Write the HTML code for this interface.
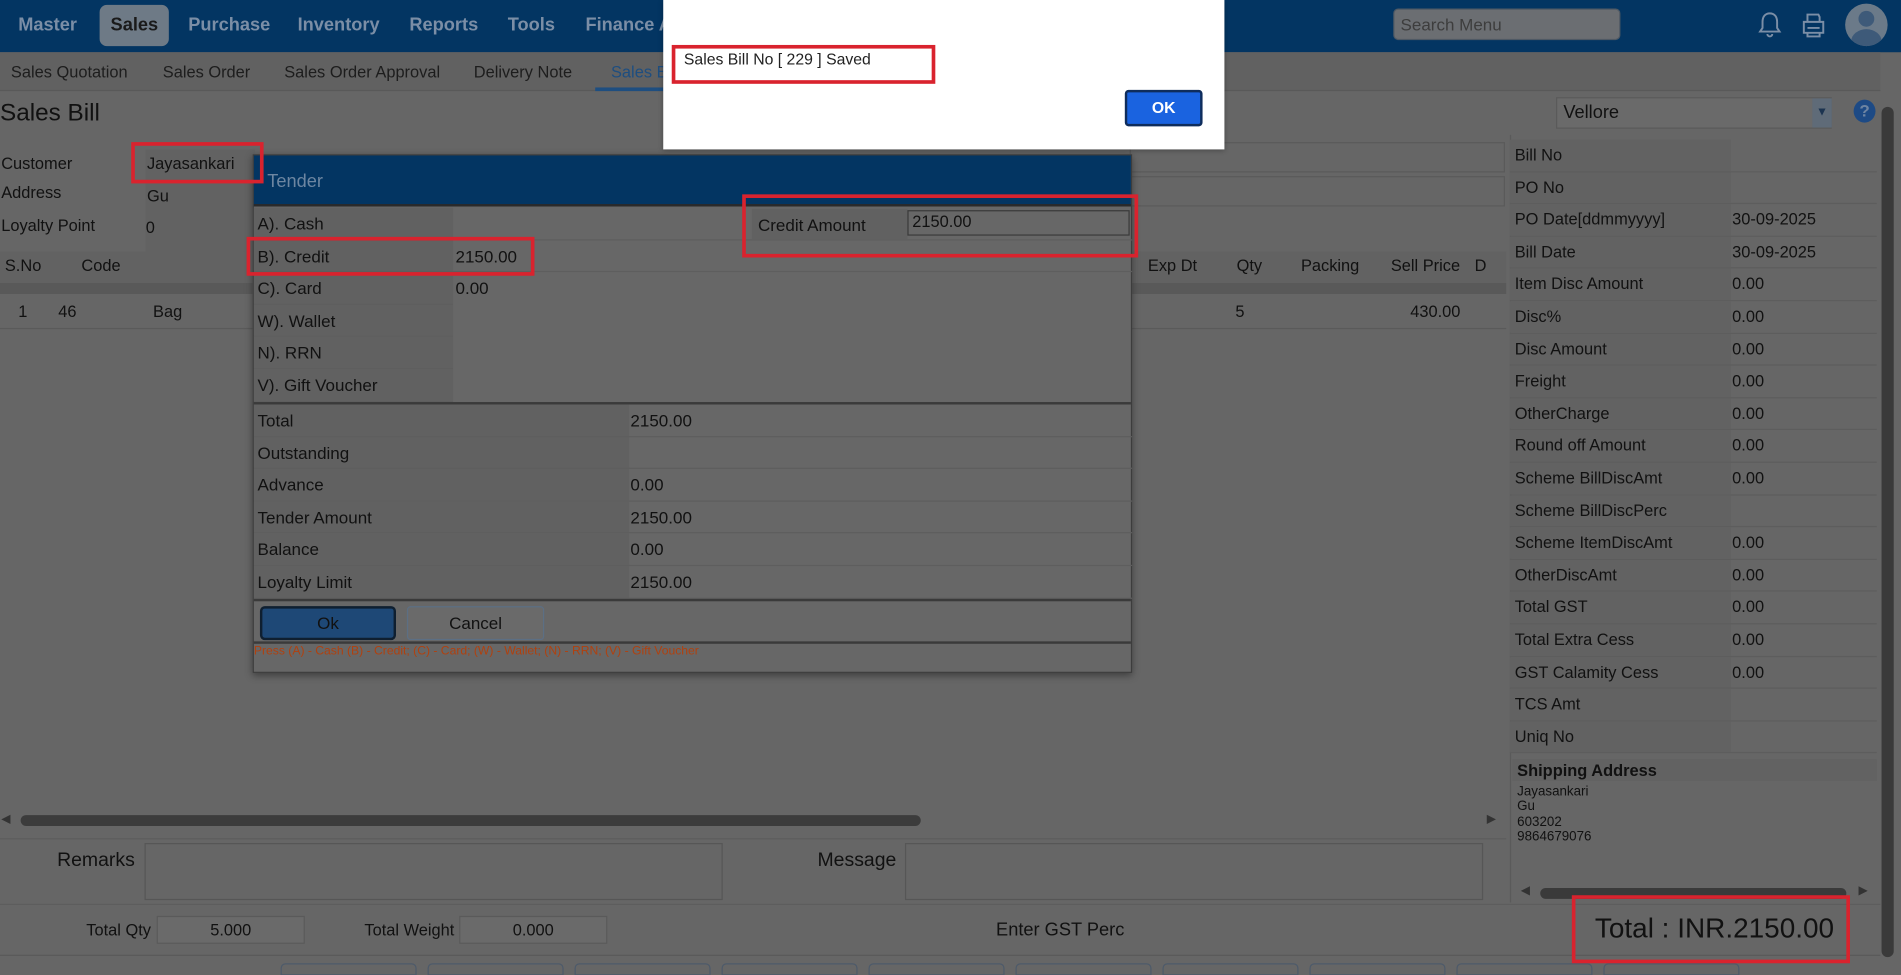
<!DOCTYPE html>
<html><head><meta charset="utf-8"><style>
*{box-sizing:border-box;margin:0;padding:0}
html,body{width:1901px;height:970px;overflow:hidden;background:#666}
#w{position:absolute;left:0;top:0;width:1565px;height:800px;transform:scale(1.21470);transform-origin:0 0;background:#666;font-family:"Liberation Sans",sans-serif;color:#111;font-size:14px}
.a{position:absolute;white-space:nowrap}
.nav{left:0;top:0;width:1565px;height:43px;background:#033562}
.ni{top:12px;font-size:15px;font-weight:bold;color:#7b8ea6}
.sub{left:0;top:43px;width:1548px;height:32px;background:#616161;border-bottom:1px solid #595959}
.si{top:52px;font-size:13.5px;color:#1d1d1d}
.lbl{font-size:13.5px;color:#111}
.rp{left:1243px;width:302px;height:26.6px;border-bottom:1px solid #5d5d5d}
.rp .l{position:absolute;left:0;top:0;width:182px;height:100%;background:#626262;padding:5px 4px;font-size:13.5px}
.rp .v{position:absolute;left:183px;top:5px;font-size:13.5px}
.red{position:absolute;border:3px solid #d9232e}
.tr{position:absolute;left:0;height:26.6px;width:723px;border-bottom:1px solid #5e5e5e}
.tr .l{position:absolute;left:0;top:0;height:100%;background:#616161;padding:5px 3px}
.tr .v{position:absolute;top:5px}
</style></head><body><div id="w">
<div class="a nav"></div>
<div class="a ni" style="left:15px">Master</div>
<div class="a" style="left:82px;top:4px;width:57px;height:34px;background:#6e7a86;border-radius:6px"></div>
<div class="a ni" style="left:91px;color:#1a1a1a">Sales</div>
<div class="a ni" style="left:155px">Purchase</div>
<div class="a ni" style="left:245px">Inventory</div>
<div class="a ni" style="left:337px">Reports</div>
<div class="a ni" style="left:418px">Tools</div>
<div class="a ni" style="left:482px">Finance A</div>
<div class="a" style="left:1147px;top:7px;width:187px;height:26px;background:#6b6e72;border-radius:4px;border:1px solid #4f5964"></div>
<div class="a" style="left:1153px;top:12px;font-size:14px;color:#3d3d3d">Search Menu</div>
<svg class="a" style="left:1447px;top:9px" width="20" height="24" viewBox="0 0 20 24"><path d="M10 2c-4 0-6 3-6 7v5l-2 3h16l-2-3V9c0-4-2-7-6-7zM8 19a2 2 0 0 0 4 0" fill="none" stroke="#7b8ea6" stroke-width="1.6"/></svg>
<svg class="a" style="left:1482px;top:10px" width="22" height="22" viewBox="0 0 22 22"><path d="M6 8V2h9l1 2v4M3 8h16v9H3zM6 17v3h10v-3M6 13h10" fill="none" stroke="#7b8ea6" stroke-width="1.6"/></svg>
<div class="a" style="left:1519px;top:3px;width:35px;height:35px;border-radius:50%;background:#6b7a89;overflow:hidden"><div class="a" style="left:11px;top:6px;width:13px;height:13px;border-radius:50%;background:#3e5a79"></div><div class="a" style="left:5px;top:21px;width:25px;height:20px;border-radius:50%;background:#3e5a79"></div></div>
<div class="a sub"></div>
<div class="a si" style="left:9px">Sales Quotation</div>
<div class="a si" style="left:134px">Sales Order</div>
<div class="a si" style="left:234px">Sales Order Approval</div>
<div class="a si" style="left:390px">Delivery Note</div>
<div class="a si" style="left:503px;color:#1e4e80">Sales B</div>
<div class="a" style="left:490px;top:72px;width:56px;height:3px;background:#1e4e80"></div>
<div class="a" style="left:1548px;top:80px;width:12px;height:720px"><div style="margin:8px 1px;width:10px;height:700px;background:#3a3a3a;border-radius:5px"></div></div>
<div class="a" style="left:0;top:82px;font-size:20px;color:#111">Sales Bill</div>
<div class="a" style="left:1281px;top:80px;width:227px;height:26px;background:#6a6a6a;border:1px solid #5a5a5a"></div>
<div class="a" style="left:1287px;top:84px;font-size:15px">Vellore</div>
<div class="a" style="left:1492px;top:81px;width:16px;height:24px;background:#5f6b78;color:#1c3450;font-size:10px;text-align:center;line-height:24px">▼</div>
<div class="a" style="left:1526px;top:82px;width:18px;height:19px;border-radius:50%;background:#1d4a85;color:#6d84a2;font-weight:bold;font-size:14px;text-align:center;line-height:19px">?</div>
<!-- left form -->
<div class="a lbl" style="left:1px;top:127px">Customer</div>
<div class="a lbl" style="left:1px;top:151px">Address</div>
<div class="a lbl" style="left:1px;top:178px">Loyalty Point</div>
<div class="a" style="left:120px;top:123px;width:90px;height:85px;background:#626262"></div>
<div class="a lbl" style="left:121px;top:127px">Jayasankari</div>
<div class="a lbl" style="left:121px;top:154px">Gu</div>
<div class="a lbl" style="left:120px;top:180px">0</div>
<div class="a" style="left:930px;top:117px;width:309px;height:25px;border:1px solid #5a5a5a"></div>
<div class="a" style="left:930px;top:145px;width:309px;height:25px;border:1px solid #5a5a5a"></div>
<div class="a" style="left:0;top:207px;width:1240px;height:26px;background:#626262"></div>
<div class="a" style="left:0;top:233px;width:1240px;height:9px;background:#595959"></div>
<div class="a lbl" style="left:4px;top:211px">S.No</div>
<div class="a lbl" style="left:67px;top:211px">Code</div>
<div class="a lbl" style="left:945px;top:211px">Exp Dt</div>
<div class="a lbl" style="left:1018px;top:211px">Qty</div>
<div class="a lbl" style="left:1071px;top:211px">Packing</div>
<div class="a lbl" style="left:1145px;top:211px">Sell Price</div>
<div class="a lbl" style="left:1214px;top:211px">D</div>
<div class="a" style="left:0;top:270px;width:1240px;height:1px;background:#5a5a5a"></div>
<div class="a lbl" style="left:15px;top:249px">1</div>
<div class="a lbl" style="left:48px;top:249px">46</div>
<div class="a lbl" style="left:126px;top:249px">Bag</div>
<div class="a lbl" style="left:1017px;top:249px">5</div>
<div class="a lbl" style="left:1161px;top:249px">430.00</div>
<!-- right panel -->
<div class="a" style="left:1243px;top:111px;width:302px;height:632px;border-left:1px solid #5a5a5a"></div>
<div class="a rp" style="top:115px"><div class="l">Bill No</div><div class="v"></div></div>
<div class="a rp" style="top:141.6px"><div class="l">PO No</div></div>
<div class="a rp" style="top:168.2px"><div class="l">PO Date[ddmmyyyy]</div><div class="v">30-09-2025</div></div>
<div class="a rp" style="top:194.8px"><div class="l">Bill Date</div><div class="v">30-09-2025</div></div>
<div class="a rp" style="top:221.4px"><div class="l">Item Disc Amount</div><div class="v">0.00</div></div>
<div class="a rp" style="top:248px"><div class="l">Disc%</div><div class="v">0.00</div></div>
<div class="a rp" style="top:274.6px"><div class="l">Disc Amount</div><div class="v">0.00</div></div>
<div class="a rp" style="top:301.2px"><div class="l">Freight</div><div class="v">0.00</div></div>
<div class="a rp" style="top:327.8px"><div class="l">OtherCharge</div><div class="v">0.00</div></div>
<div class="a rp" style="top:354.4px"><div class="l">Round off Amount</div><div class="v">0.00</div></div>
<div class="a rp" style="top:381px"><div class="l">Scheme BillDiscAmt</div><div class="v">0.00</div></div>
<div class="a rp" style="top:407.6px"><div class="l">Scheme BillDiscPerc</div></div>
<div class="a rp" style="top:434.2px"><div class="l">Scheme ItemDiscAmt</div><div class="v">0.00</div></div>
<div class="a rp" style="top:460.8px"><div class="l">OtherDiscAmt</div><div class="v">0.00</div></div>
<div class="a rp" style="top:487.4px"><div class="l">Total GST</div><div class="v">0.00</div></div>
<div class="a rp" style="top:514px"><div class="l">Total Extra Cess</div><div class="v">0.00</div></div>
<div class="a rp" style="top:540.6px"><div class="l">GST Calamity Cess</div><div class="v">0.00</div></div>
<div class="a rp" style="top:567.2px"><div class="l">TCS Amt</div></div>
<div class="a rp" style="top:593.8px"><div class="l">Uniq No</div></div>
<div class="a" style="left:1245px;top:625px;width:300px;height:18px;background:#626262"></div>
<div class="a" style="left:1249px;top:627px;font-size:13.5px;font-weight:bold">Shipping Address</div>
<div class="a" style="left:1249px;top:646px;font-size:11px;line-height:12.4px;white-space:pre">Jayasankari
Gu
603202
9864679076</div>
<div class="a" style="left:1268px;top:731px;width:252px;height:9px;background:#3a3a3a;border-radius:5px"></div>
<div class="a" style="left:1252px;top:728px;font-size:10px;color:#333">◀</div>
<div class="a" style="left:1530px;top:728px;font-size:10px;color:#333">▶</div>
<!-- h scroll -->
<div class="a" style="left:17px;top:671px;width:741px;height:9px;background:#3c3c3c;border-radius:5px"></div>
<div class="a" style="left:1px;top:669px;font-size:10px;color:#333">◀</div>
<div class="a" style="left:1224px;top:669px;font-size:10px;color:#333">▶</div>
<div class="a" style="left:0;top:690px;width:1240px;height:1px;background:#5d5d5d"></div>
<div class="a" style="left:47px;top:700px;font-size:16px">Remarks</div>
<div class="a" style="left:119px;top:694px;width:476px;height:47px;border:1px solid #565656"></div>
<div class="a" style="left:673px;top:700px;font-size:16px">Message</div>
<div class="a" style="left:745px;top:694px;width:476px;height:47px;border:1px solid #565656"></div>
<div class="a" style="left:0;top:744px;width:1548px;height:1px;background:#5d5d5d"></div>
<div class="a" style="left:71px;top:758px;font-size:13.5px">Total Qty</div>
<div class="a" style="left:129px;top:754px;width:122px;height:23px;background:#6a6a6a;border:1px solid #5a5a5a;text-align:center;font-size:13.5px;line-height:21px">5.000</div>
<div class="a" style="left:300px;top:758px;font-size:13.5px">Total Weight</div>
<div class="a" style="left:378px;top:754px;width:122px;height:23px;background:#6a6a6a;border:1px solid #5a5a5a;text-align:center;font-size:13.5px;line-height:21px">0.000</div>
<div class="a" style="left:820px;top:757px;font-size:15px">Enter GST Perc</div>
<div class="a" style="left:1313px;top:751px;font-size:23px">Total : INR.2150.00</div>
<div class="a" style="left:0;top:786px;width:1548px;height:1px;background:#5a5a5a"></div>
<div class="a" style="left:231px;top:793px;width:1310px;height:10px;display:flex;gap:9px">
<div style="width:112px;border:1px solid #4d5a6a;border-radius:4px 4px 0 0"></div><div style="width:112px;border:1px solid #4d5a6a;border-radius:4px 4px 0 0"></div><div style="width:112px;border:1px solid #4d5a6a;border-radius:4px 4px 0 0"></div><div style="width:112px;border:1px solid #4d5a6a;border-radius:4px 4px 0 0"></div><div style="width:112px;border:1px solid #4d5a6a;border-radius:4px 4px 0 0"></div><div style="width:112px;border:1px solid #4d5a6a;border-radius:4px 4px 0 0"></div><div style="width:112px;border:1px solid #4d5a6a;border-radius:4px 4px 0 0"></div><div style="width:112px;border:1px solid #4d5a6a;border-radius:4px 4px 0 0"></div><div style="width:112px;border:1px solid #4d5a6a;border-radius:4px 4px 0 0"></div><div style="width:112px;border:1px solid #4d5a6a;border-radius:4px 4px 0 0"></div></div>
<!-- tender -->
<div class="a" style="left:208px;top:127px;width:724px;height:427px;background:#676767;border:1px solid #3d3d3d;box-shadow:0 2px 6px rgba(0,0,0,.4)">
<div class="a" style="left:0;top:0;width:722px;height:42px;background:#033562;border-bottom:2px solid #2a2a2a"></div>
<div class="a" style="left:11px;top:13px;font-size:15px;color:#6d86a1">Tender</div>
<div class="tr" style="top:43px"><div class="l" style="width:164px">A). Cash</div></div>
<div class="tr" style="top:69.6px"><div class="l" style="width:164px">B). Credit</div><div class="v" style="left:166px">2150.00</div></div>
<div class="tr" style="top:96.2px;width:164px"><div class="l" style="width:164px">C). Card</div><div class="v" style="left:166px">0.00</div></div>
<div class="tr" style="top:122.8px;width:164px"><div class="l" style="width:164px">W). Wallet</div></div>
<div class="tr" style="top:149.4px;width:164px"><div class="l" style="width:164px">N). RRN</div></div>
<div class="tr" style="top:176px;width:164px"><div class="l" style="width:164px">V). Gift Voucher</div></div>
<div class="a" style="left:0;top:203px;width:722px;height:2px;background:#3a3a3a"></div>
<div class="tr" style="top:205px"><div class="l" style="width:309px">Total</div><div class="v" style="left:310px">2150.00</div></div>
<div class="tr" style="top:231.6px"><div class="l" style="width:309px">Outstanding</div></div>
<div class="tr" style="top:258.2px"><div class="l" style="width:309px">Advance</div><div class="v" style="left:310px">0.00</div></div>
<div class="tr" style="top:284.8px"><div class="l" style="width:309px">Tender Amount</div><div class="v" style="left:310px">2150.00</div></div>
<div class="tr" style="top:311.4px"><div class="l" style="width:309px">Balance</div><div class="v" style="left:310px">0.00</div></div>
<div class="tr" style="top:338px"><div class="l" style="width:309px">Loyalty Limit</div><div class="v" style="left:310px">2150.00</div></div>
<div class="a" style="left:0;top:365px;width:722px;height:2px;background:#3a3a3a"></div>
<div class="a" style="left:5px;top:371px;width:112px;height:28px;background:#1e4876;border:2px solid #0f1f30;border-radius:4px;text-align:center;line-height:24px;font-size:14px">Ok</div>
<div class="a" style="left:126px;top:371px;width:113px;height:28px;background:#6a6a6a;border:1px solid #5c6f84;border-radius:3px;text-align:center;line-height:26px;font-size:14px">Cancel</div>
<div class="a" style="left:0;top:400px;width:722px;height:2px;background:#3a3a3a"></div>
<div class="a" style="left:0;top:403px;font-size:10px;color:#b0410f">Press (A) - Cash (B) - Credit; (C) - Card; (W) - Wallet; (N) - RRN; (V) - Gift Voucher</div>
<div class="a" style="left:410px;top:44px;width:312px;height:25px;background:#616161;width:128px"></div>
<div class="a" style="left:415px;top:49px;font-size:14px">Credit Amount</div>
<div class="a" style="left:538px;top:45px;width:183px;height:21px;border:1px solid #3a3a3a;padding:1px 3px;font-size:13.5px">2150.00</div>
</div>
<!-- alert -->
<div class="a" style="left:546px;top:0;width:462px;height:123px;background:#fff;box-shadow:0 1px 4px rgba(0,0,0,.3)"></div>
<div class="a" style="left:563px;top:41px;font-size:13px;color:#222">Sales Bill No [ 229 ] Saved</div>
<div class="a" style="left:926px;top:74px;width:64px;height:30px;background:#1a63e0;border:2px solid #0f2d5c;border-radius:3px;color:#fff;font-weight:bold;font-size:13px;text-align:center;line-height:26px">OK</div>
<!-- red boxes -->
<div class="red" style="left:553px;top:37px;width:217px;height:32px"></div>
<div class="red" style="left:108px;top:117px;width:109px;height:34px"></div>
<div class="red" style="left:203px;top:195px;width:237px;height:32px"></div>
<div class="red" style="left:611px;top:160px;width:326px;height:52px"></div>
<div class="red" style="left:1294px;top:737px;width:229px;height:56px"></div>
</div></body></html>
